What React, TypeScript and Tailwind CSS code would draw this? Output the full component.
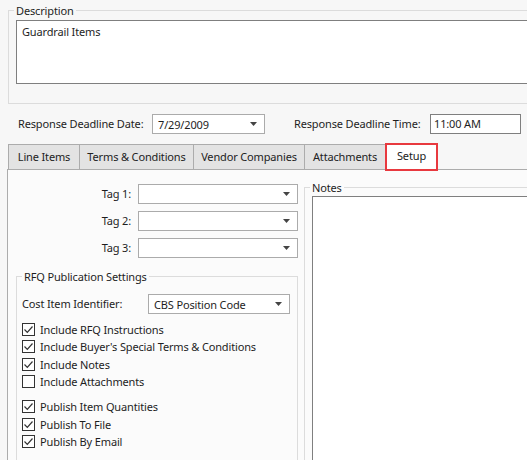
import React from "react";

const font = { fontFamily: '"Noto Sans", "Open Sans", sans-serif' };

function Arrow() {
  return (
    <svg width="7" height="4" viewBox="0 0 7 4" className="shrink-0">
      <path d="M0 0 H7 L3.5 4 Z" fill="#444" />
    </svg>
  );
}

function Combo({ value, className }: { value?: string; className: string }) {
  return (
    <div
      className={
        "flex items-center justify-between border border-[#ababab] bg-white pl-[5px] pr-[7px] " +
        className
      }
    >
      <span className="leading-none">{value}</span>
      <Arrow />
    </div>
  );
}

function Check({ label, checked }: { label: string; checked: boolean }) {
  return (
    <div className="flex h-[17.5px] items-center">
      <div className="flex h-[13px] w-[13px] shrink-0 items-center justify-center border border-[#333] bg-white">
        {checked && (
          <svg width="11" height="11" viewBox="0 0 11 11">
            <path d="M1.5 5.5 L4.3 8.3 L9.5 2.5" fill="none" stroke="#333" strokeWidth="1.2" />
          </svg>
        )}
      </div>
      <span className="ml-[5px] whitespace-nowrap leading-none">{label}</span>
    </div>
  );
}

const tabs = ["Line Items", "Terms & Conditions", "Vendor Companies", "Attachments"];
const tabWidths = ["w-[71px]", "w-[114px]", "w-[111px]", "w-[81px]"];

export default function App() {
  return (
    <div
      className="h-[460px] w-[527px] overflow-hidden bg-[#f7f7f7] text-[11px] tracking-[-0.15px] text-[#1e1e1e]"
      style={font}
    >
      {/* Description */}
      <fieldset className="ml-[8px] mt-[3px] w-[540px] border border-[#dcdcdc] pb-[19px] pl-[7px] pt-[2px]">
        <legend className="-ml-[2px] px-[2px] leading-[15px]">Description</legend>
        <div className="h-[64px] border border-[#7f7f7f] bg-white px-[5px] pt-[3px] leading-[15px]">
          Guardrail Items
        </div>
      </fieldset>

      {/* Deadlines */}
      <div className="mt-[10px] flex h-[20px] items-center whitespace-nowrap pl-[18px]">
        <span className="w-[134px] shrink-0">Response Deadline Date:</span>
        <Combo value="7/29/2009" className="h-[20px] w-[113px] shrink-0" />
        <span className="ml-[29px] w-[136px] shrink-0">Response Deadline Time:</span>
        <div className="flex h-[20px] w-[91px] shrink-0 items-center border border-[#7f7f7f] bg-white pl-[3px]">
          11:00 AM
        </div>
      </div>

      {/* Tabs */}
      <div className="ml-[8px] mt-[10px] flex h-[25px] whitespace-nowrap">
        {tabs.map((t, i) => (
          <div
            key={t}
            className={
              "flex items-center justify-center border-l border-t border-[#acacac] bg-[#e3e3e3] text-[#222] " +
              tabWidths[i]
            }
          >
            {t}
          </div>
        ))}
        <div className="relative z-10 -mt-[1px] flex h-[28px] w-[53px] items-center justify-center border-2 border-[#e8393f] bg-white pb-[2px] text-[#222]">
          Setup
        </div>
      </div>

      {/* Panel */}
      <div className="ml-[7px] flex h-[300px] border-l border-t border-[#acacac] bg-[#fbfbfb]">
        <div className="w-[290px] shrink-0 pt-[14px]">
          {["Tag 1:", "Tag 2:", "Tag 3:"].map((t, i) => (
            <div key={t} className={"flex h-[20px] items-center " + (i > 0 ? "mt-[7px]" : "")}>
              <span className="w-[123px] text-right">{t}</span>
              <Combo className="ml-[7px] h-[20px] w-[160px]" />
            </div>
          ))}

          <fieldset className="ml-[8px] mt-[11px] h-[200px] w-[282px] border border-[#dcdcdc] pl-[5px] pt-[10px]">
            <legend className="px-[2px] leading-[15px]">RFQ Publication Settings</legend>
            <div className="flex h-[20px] items-center">
              <span className="w-[126px] whitespace-nowrap">Cost Item Identifier:</span>
              <Combo value="CBS Position Code" className="h-[20px] w-[142px]" />
            </div>
            <div className="mt-[6.5px]">
              <Check label="Include RFQ Instructions" checked />
              <Check label="Include Buyer's Special Terms & Conditions" checked />
              <Check label="Include Notes" checked />
              <Check label="Include Attachments" checked={false} />
            </div>
            <div className="mt-[7.5px]">
              <Check label="Publish Item Quantities" checked />
              <Check label="Publish To File" checked />
              <Check label="Publish By Email" checked />
            </div>
          </fieldset>
        </div>

        <fieldset className="ml-[6px] mt-[10px] h-[300px] w-[260px] shrink-0 border border-[#dcdcdc] pl-[7px] pt-[1px]">
          <legend className="-ml-[2px] px-[2px] leading-[15px]">Notes</legend>
          <div className="h-[280px] border border-[#7f7f7f] bg-white" />
        </fieldset>
      </div>
    </div>
  );
}
